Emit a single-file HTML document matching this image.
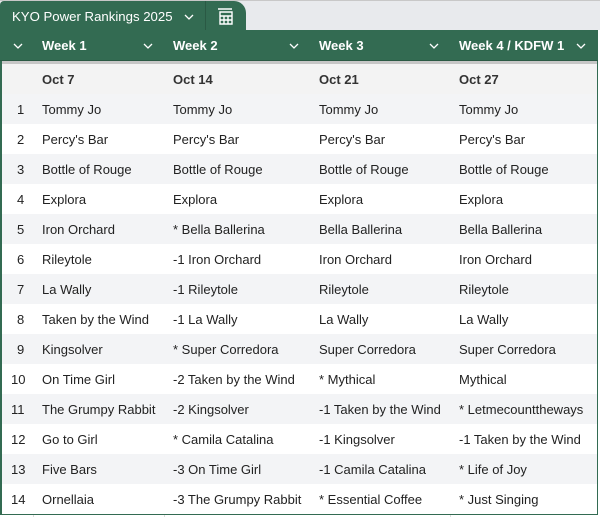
<!DOCTYPE html>
<html><head><style>
*{margin:0;padding:0;box-sizing:border-box}
body{width:600px;height:517px;overflow:hidden;background:#fff;font-family:"Liberation Sans",Arial,sans-serif;position:relative;font-size:13px;color:#222}
.top{position:absolute;left:0;top:0;width:600px;height:30px;background:#e8eaed;border-top:1px solid #c8c8c8}
.tab{position:absolute;left:0;top:1px;width:246px;height:30px;background:#336b52;border-radius:0 12px 0 0;border-top-left-radius:4px}
.tabt{position:absolute;left:12px;top:8px;color:#fff;font-size:13.2px}
.hdr{position:absolute;left:0;top:30px;width:598px;height:31px;background:#336b52;border-bottom:1px solid #2a5944}
.sep{position:absolute;left:0;top:61px;width:598px;height:3px;background:#c6c6c6}
.h{position:absolute;top:38px;color:#fff;font-weight:bold;font-size:13px}
.chev{position:absolute;top:43px}
.row{position:absolute;left:1px;width:596px;height:30px}
.c{position:absolute;line-height:32px;white-space:nowrap}
.frame{position:absolute;left:0;top:61px;width:598px;height:454px;border-left:2px solid #336b52;border-right:1px solid #336b52;border-bottom:1px solid #336b52}
</style></head><body>
<div class="top"></div>
<div class="tab"><div class="tabt">KYO Power Rankings 2025</div>
<svg style="position:absolute;left:184px;top:13px" width="10" height="7"><path d="M1 1L5 5L9 1" stroke="#fff" stroke-width="1.3" fill="none"/></svg>
<div style="position:absolute;left:205px;top:0;width:1px;height:30px;background:#2a5944"></div>
<svg style="position:absolute;left:217px;top:7px" width="18" height="17" fill="none" stroke="#fff" stroke-width="1.4"><path d="M1 1h14M3 4h12v12H3zM3 8h12M3 12h12M7 8v8M11 8v8"/></svg>
</div>
<div class="hdr"></div>
<div class="sep"></div>
<svg class="chev" style="left:13px" width="10" height="7"><path d="M1 1L5 5L9 1" stroke="#fff" stroke-width="1.3" fill="none"/></svg>
<div class="h" style="left:42px">Week 1</div>
<svg class="chev" style="left:143px" width="10" height="7"><path d="M1 1L5 5L9 1" stroke="#fff" stroke-width="1.3" fill="none"/></svg>
<div class="h" style="left:173px">Week 2</div>
<svg class="chev" style="left:289px" width="10" height="7"><path d="M1 1L5 5L9 1" stroke="#fff" stroke-width="1.3" fill="none"/></svg>
<div class="h" style="left:319px">Week 3</div>
<svg class="chev" style="left:429px" width="10" height="7"><path d="M1 1L5 5L9 1" stroke="#fff" stroke-width="1.3" fill="none"/></svg>
<div class="h" style="left:459px">Week 4 / KDFW 1</div>
<svg class="chev" style="left:576px" width="10" height="7"><path d="M1 1L5 5L9 1" stroke="#fff" stroke-width="1.3" fill="none"/></svg>

<div class="row" style="top:64px;background:#f3f3f3;font-weight:bold;color:#333">
<div class="c" style="left:41px">Oct 7</div><div class="c" style="left:172px">Oct 14</div><div class="c" style="left:318px">Oct 21</div><div class="c" style="left:458px">Oct 27</div></div>

<div class="row" style="top:94px;background:#f3f4f6"><div class="c" style="left:16px">1</div><div class="c" style="left:41px">Tommy Jo</div><div class="c" style="left:172px">Tommy Jo</div><div class="c" style="left:318px">Tommy Jo</div><div class="c" style="left:458px">Tommy Jo</div></div>
<div class="row" style="top:124px"><div class="c" style="left:16px">2</div><div class="c" style="left:41px">Percy's Bar</div><div class="c" style="left:172px">Percy's Bar</div><div class="c" style="left:318px">Percy's Bar</div><div class="c" style="left:458px">Percy's Bar</div></div>
<div class="row" style="top:154px;background:#f3f4f6"><div class="c" style="left:16px">3</div><div class="c" style="left:41px">Bottle of Rouge</div><div class="c" style="left:172px">Bottle of Rouge</div><div class="c" style="left:318px">Bottle of Rouge</div><div class="c" style="left:458px">Bottle of Rouge</div></div>
<div class="row" style="top:184px"><div class="c" style="left:16px">4</div><div class="c" style="left:41px">Explora</div><div class="c" style="left:172px">Explora</div><div class="c" style="left:318px">Explora</div><div class="c" style="left:458px">Explora</div></div>
<div class="row" style="top:214px;background:#f3f4f6"><div class="c" style="left:16px">5</div><div class="c" style="left:41px">Iron Orchard</div><div class="c" style="left:172px">* Bella Ballerina</div><div class="c" style="left:318px">Bella Ballerina</div><div class="c" style="left:458px">Bella Ballerina</div></div>
<div class="row" style="top:244px"><div class="c" style="left:16px">6</div><div class="c" style="left:41px">Rileytole</div><div class="c" style="left:172px">-1 Iron Orchard</div><div class="c" style="left:318px">Iron Orchard</div><div class="c" style="left:458px">Iron Orchard</div></div>
<div class="row" style="top:274px;background:#f3f4f6"><div class="c" style="left:16px">7</div><div class="c" style="left:41px">La Wally</div><div class="c" style="left:172px">-1 Rileytole</div><div class="c" style="left:318px">Rileytole</div><div class="c" style="left:458px">Rileytole</div></div>
<div class="row" style="top:304px"><div class="c" style="left:16px">8</div><div class="c" style="left:41px">Taken by the Wind</div><div class="c" style="left:172px">-1 La Wally</div><div class="c" style="left:318px">La Wally</div><div class="c" style="left:458px">La Wally</div></div>
<div class="row" style="top:334px;background:#f3f4f6"><div class="c" style="left:16px">9</div><div class="c" style="left:41px">Kingsolver</div><div class="c" style="left:172px">* Super Corredora</div><div class="c" style="left:318px">Super Corredora</div><div class="c" style="left:458px">Super Corredora</div></div>
<div class="row" style="top:364px"><div class="c" style="left:10px">10</div><div class="c" style="left:41px">On Time Girl</div><div class="c" style="left:172px">-2 Taken by the Wind</div><div class="c" style="left:318px">* Mythical</div><div class="c" style="left:458px">Mythical</div></div>
<div class="row" style="top:394px;background:#f3f4f6"><div class="c" style="left:10px">11</div><div class="c" style="left:41px">The Grumpy Rabbit</div><div class="c" style="left:172px">-2 Kingsolver</div><div class="c" style="left:318px">-1 Taken by the Wind</div><div class="c" style="left:458px">* Letmecounttheways</div></div>
<div class="row" style="top:424px"><div class="c" style="left:10px">12</div><div class="c" style="left:41px">Go to Girl</div><div class="c" style="left:172px">* Camila Catalina</div><div class="c" style="left:318px">-1 Kingsolver</div><div class="c" style="left:458px">-1 Taken by the Wind</div></div>
<div class="row" style="top:454px;background:#f3f4f6"><div class="c" style="left:10px">13</div><div class="c" style="left:41px">Five Bars</div><div class="c" style="left:172px">-3 On Time Girl</div><div class="c" style="left:318px">-1 Camila Catalina</div><div class="c" style="left:458px">* Life of Joy</div></div>
<div class="row" style="top:484px"><div class="c" style="left:10px">14</div><div class="c" style="left:41px">Ornellaia</div><div class="c" style="left:172px">-3 The Grumpy Rabbit</div><div class="c" style="left:318px">* Essential Coffee</div><div class="c" style="left:458px">* Just Singing</div></div>
<div class="frame"></div>
<div style="position:absolute;left:33px;top:515px;width:1px;height:2px;background:#ddd"></div>
<div style="position:absolute;left:164px;top:515px;width:1px;height:2px;background:#ddd"></div>
<div style="position:absolute;left:450px;top:515px;width:1px;height:2px;background:#ddd"></div>
</body></html>
